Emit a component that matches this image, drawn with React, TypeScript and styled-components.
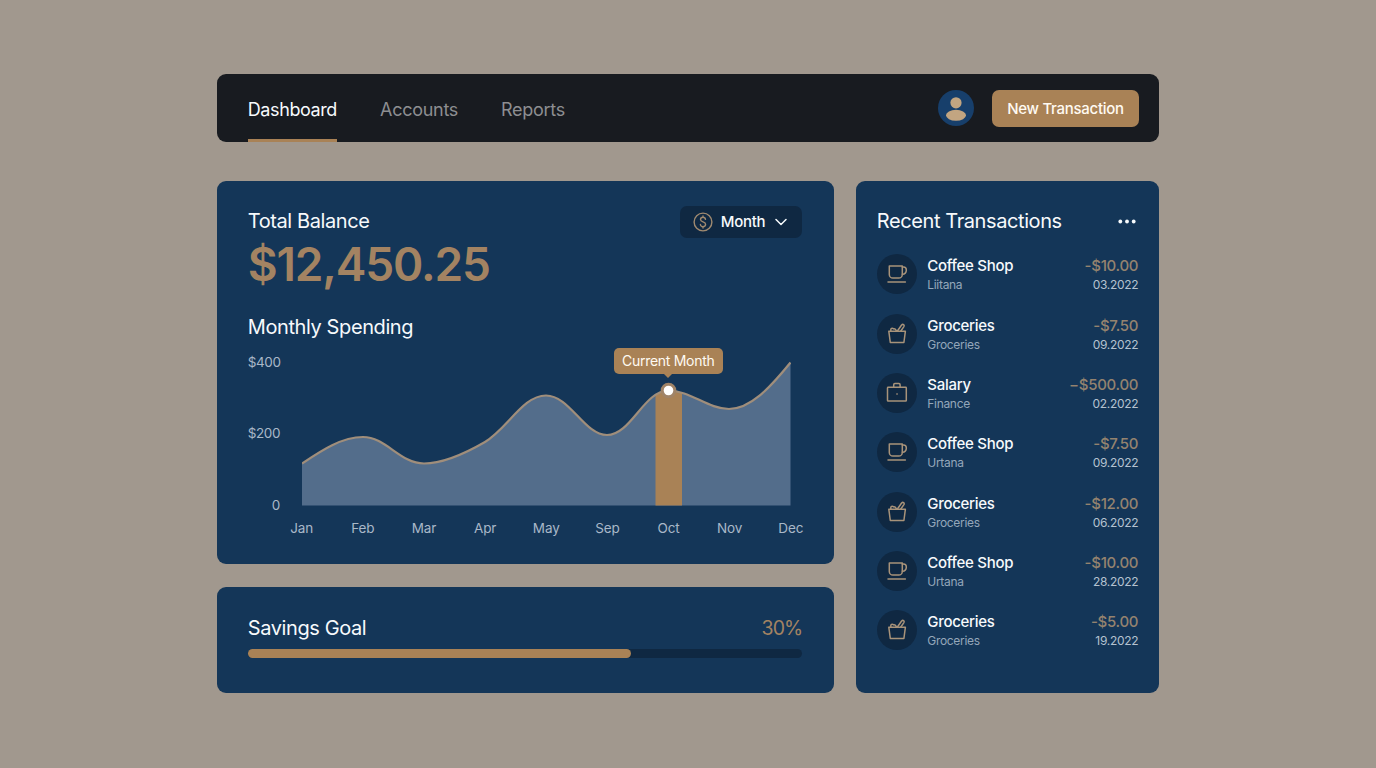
import React from "react";
import styled, { createGlobalStyle } from "styled-components";

const colors = {
  page: "#a1988e",
  bar: "#181b20",
  card: "#143658",
  deep: "#0f2842",
  gold: "#a98256",
  goldText: "#a38362",
  white: "#f7fafc",
  muted: "#a9b8c8",
};

const transactions = [
  { icon: "cup", name: "Coffee Shop", place: "Liitana", amount: "-$10.00", date: "03.2022" },
  { icon: "basket", name: "Groceries", place: "Groceries", amount: "-$7.50", date: "09.2022" },
  { icon: "case", name: "Salary", place: "Finance", amount: "−$500.00", date: "02.2022" },
  { icon: "cup", name: "Coffee Shop", place: "Urtana", amount: "-$7.50", date: "09.2022" },
  { icon: "basket", name: "Groceries", place: "Groceries", amount: "-$12.00", date: "06.2022" },
  { icon: "cup", name: "Coffee Shop", place: "Urtana", amount: "-$10.00", date: "28.2022" },
  { icon: "basket", name: "Groceries", place: "Groceries", amount: "-$5.00", date: "19.2022" },
];

const months = ["Jan", "Feb", "Mar", "Apr", "May", "Sep", "Oct", "Nov", "Dec"];

const curve =
  "M0 111.5 C20 98 40 85 61 85 C84 85 98 111.5 122 111.5 C142 111.5 164 101 183 90 C206 76 221 43.5 244 43.5 C268 43.5 282 83 305 83 C329 83 342 38.5 366.5 38.5 C388 38.5 406 57 427 57 C448 57 467 37 488.5 10.5";

function Icon({ name }: { name: string }) {
  return (
    <svg width="24" height="24" viewBox="0 0 24 24" fill="none" stroke="#a8937a" strokeWidth="1.5" strokeLinejoin="round" strokeLinecap="round">
      {name === "cup" && (
        <>
          <path d="M4.3 3.9h13v8.6a3.6 3.6 0 0 1-3.6 3.6H7.9a3.6 3.6 0 0 1-3.6-3.6z" />
          <path d="M17.3 5h1.200a2.800 2.800 0 0 1 2.800 2.800v.8a3.600 3.600 0 0 1-3.600 3.600h-.4" />
          <path d="M3 19.900h17.400" />
        </>
      )}
      {name === "basket" && (
        <>
          <path d="M3.800 9.200h16.600l-1.500 11.300H5.300z" />
          <path d="M5.800 8.900V7.500q.1-1.200 1.300-1.200 1 0 1.400.6.900-.4 1.600.2l1.500 1.800" />
          <path d="M12.400 9 16.600 3q1-1 2-.4 1 .8.300 2L15.800 9" />
        </>
      )}
      {name === "case" && (
        <>
          <rect x="2.500" y="6.300" width="18.800" height="13.800" rx=".6" />
          <path d="M8.700 6.100V3.800q0-1.200 1.200-1.200h4q1.200 0 1.200 1.200v2.300" />
          <path d="M11.900 13h.3" />
        </>
      )}
    </svg>
  );
}

export default function App() {
  return (
    <Page>
      <GlobalStyle />
      <Navbar>
        <Tabs>
          <Tab $active>Dashboard</Tab>
          <Tab>Accounts</Tab>
          <Tab>Reports</Tab>
        </Tabs>
        <Avatar>
          <svg width="36" height="36" viewBox="0 0 36 36" fill="#c2a581">
            <circle cx="18" cy="12.8" r="5.6" />
            <ellipse cx="18" cy="25.3" rx="10" ry="5.5" />
          </svg>
        </Avatar>
        <NewButton>New Transaction</NewButton>
      </Navbar>

      <Content>
        <Column>
          <BalanceCard>
            <CardHead>
              <Title>Total Balance</Title>
              <MonthSelect>
                <svg width="20" height="20" viewBox="0 0 20 20" fill="none" stroke="#a08a70" strokeWidth="1.4" strokeLinecap="round">
                  <circle cx="10" cy="10" r="8.9" />
                  <path d="M12.500 7.300c-.2-1.400-1.200-2.100-2.500-2.100-1.500 0-2.500.9-2.500 2.300 0 3.100 5.100 1.700 5.100 4.800 0 1.500-1.100 2.400-2.600 2.400-1.400 0-2.400-.8-2.600-2.200M10 4v1.200M10 14.800V16" />
                </svg>
                <span>Month</span>
                <svg width="12" height="8" viewBox="0 0 12 8" fill="none" stroke={colors.white} strokeWidth="1.5" strokeLinecap="round" strokeLinejoin="round">
                  <path d="M1 1.5 6 6.5l5-5" />
                </svg>
              </MonthSelect>
            </CardHead>
            <Amount>$12,450.25</Amount>
            <SpendingTitle>Monthly Spending</SpendingTitle>
            <Chart>
              <YAxis>
                <span>$400</span>
                <span>$200</span>
                <span>0</span>
              </YAxis>
              <Plot>
                <svg width="489" height="163" viewBox="0 0 489 163" fill="none">
                  <path d={`${curve} V153.5 H0 Z`} fill="#536d8b" />
                  <path d="M353.5 42 Q366.5 36 380 41 V153.5 H353.5 Z" fill={colors.gold} />
                  <path d={curve} stroke="#a08e7b" strokeWidth="2.2" />
                  <circle cx="366.5" cy="38.5" r="7.8" fill="#a08468" />
                  <circle cx="366.5" cy="38.5" r="4.8" fill="#fff" />
                </svg>
                <Tooltip>Current Month</Tooltip>
                <XAxis>
                  {months.map((m) => (
                    <span key={m}>{m}</span>
                  ))}
                </XAxis>
              </Plot>
            </Chart>
          </BalanceCard>

          <SavingsCard>
            <CardHead>
              <Title>Savings Goal</Title>
              <Percent>30%</Percent>
            </CardHead>
            <Track>
              <Fill />
            </Track>
          </SavingsCard>
        </Column>

        <RecentCard>
          <CardHead>
            <Title>Recent Transactions</Title>
            <svg width="20" height="30" viewBox="0 0 20 30" fill={colors.white}>
              <circle cx="2.3" cy="15.5" r="1.9" />
              <circle cx="9" cy="15.5" r="1.9" />
              <circle cx="15.7" cy="15.5" r="1.9" />
            </svg>
          </CardHead>
          <List>
            {transactions.map((t, i) => (
              <Row key={i}>
                <IconCircle>
                  <Icon name={t.icon} />
                </IconCircle>
                <Info>
                  <Name>{t.name}</Name>
                  <Small>{t.place}</Small>
                </Info>
                <Info $right>
                  <Price>{t.amount}</Price>
                  <Small $bright>{t.date}</Small>
                </Info>
              </Row>
            ))}
          </List>
        </RecentCard>
      </Content>
    </Page>
  );
}

const GlobalStyle = createGlobalStyle`
  * {
    box-sizing: border-box;
  }

  body {
    margin: 0;
    background-color: ${colors.page};
    font-family: Inter, "Liberation Sans", sans-serif;
  }
`;

const Page = styled.div`
  width: 942.5px;
  margin: 0 auto;
  padding-top: 74px;
`;

const Navbar = styled.nav`
  display: flex;
  align-items: center;
  height: 68px;
  padding: 0 20px 0 31px;
  border-radius: 9px;
  background-color: ${colors.bar};
`;

const Tabs = styled.div`
  display: flex;
  gap: 43px;
  height: 100%;
  margin-right: auto;
`;

const Tab = styled.a<{ $active?: boolean }>`
  height: 100%;
  padding-top: 3px;
  border-bottom: 3px solid ${(p) => (p.$active ? colors.gold : "transparent")};
  color: ${(p) => (p.$active ? colors.white : "#8d8e91")};
  font-size: 18px;
  line-height: 66px;
  letter-spacing: ${(p) => (p.$active ? "-0.4px" : "-0.28px")};
`;

const Avatar = styled.div`
  width: 36px;
  height: 36px;
  margin-right: 17.5px;
  border-radius: 50%;
  background-color: #173f6b;
`;

const NewButton = styled.button`
  width: 147.5px;
  height: 37px;
  padding: 0;
  border: 0;
  border-radius: 7px;
  background-color: ${colors.gold};
  color: #fffaf2;
  font: 500 15px Inter, sans-serif;
  letter-spacing: -0.28px;
`;

const Content = styled.main`
  display: flex;
  gap: 22px;
  margin-top: 38.8px;
`;

const Column = styled.div`
  display: flex;
  flex-direction: column;
  gap: 22.5px;
  width: 617px;
`;

const Card = styled.section`
  border-radius: 9px;
  background-color: ${colors.card};
`;

const BalanceCard = styled(Card)`
  height: 383.5px;
  padding: 25.2px 31.4px 0 31px;
`;

const SavingsCard = styled(Card)`
  height: 106.5px;
  padding: 26.2px 31.4px 0 31px;
`;

const RecentCard = styled(Card)`
  width: 303.5px;
  height: 512.5px;
  padding: 25.2px 21px 0;
`;

const CardHead = styled.div`
  display: flex;
  justify-content: space-between;
  height: 30px;
`;

const Title = styled.h2`
  margin: 0;
  color: ${colors.white};
  font-size: 20px;
  font-weight: 400;
  line-height: 30px;
  letter-spacing: -0.4px;
`;

const SpendingTitle = styled(Title)`
  margin-top: 23px;
`;

const MonthSelect = styled.div`
  display: flex;
  align-items: center;
  gap: 7.5px;
  width: 122.5px;
  height: 32px;
  padding-left: 13.5px;
  border-radius: 7px;
  background-color: ${colors.deep};
  color: ${colors.white};
  font-size: 15px;
  font-weight: 500;
  letter-spacing: -0.3px;

  svg:last-child {
    margin-left: 2px;
  }
`;

const Amount = styled.div`
  margin-top: 3.2px;
  color: ${colors.goldText};
  font-size: 46px;
  font-weight: 600;
  line-height: 50px;
  letter-spacing: -1.15px;
`;

const Chart = styled.div`
  display: flex;
  gap: 22px;
  margin-top: 9.6px;
  color: ${colors.muted};
  font-size: 13.5px;
  line-height: 20px;
`;

const YAxis = styled.div`
  display: flex;
  flex-direction: column;
  justify-content: space-between;
  width: 32px;
  height: 163px;
  text-align: right;
  letter-spacing: -0.4px;
`;

const Plot = styled.div`
  position: relative;
  width: 489px;

  svg {
    display: block;
  }
`;

const XAxis = styled.div`
  display: flex;
  justify-content: space-between;
  margin-top: 3.2px;
  letter-spacing: -0.1px;

  span {
    display: flex;
    justify-content: center;
    width: 0;
  }
`;

const Tooltip = styled.div`
  position: absolute;
  left: 312px;
  top: -4px;
  width: 109px;
  height: 26px;
  border-radius: 5px;
  background-color: ${colors.gold};
  color: #fffaf2;
  font-size: 14px;
  line-height: 26px;
  letter-spacing: -0.28px;
  text-align: center;

  &::after {
    content: "";
    position: absolute;
    left: 49px;
    top: 25.5px;
    border: 5.5px solid transparent;
    border-bottom: 0;
    border-top-color: ${colors.gold};
  }
`;

const Percent = styled.span`
  color: ${colors.goldText};
  font-size: 19.5px;
  line-height: 30px;
  letter-spacing: -0.9px;
`;

const Track = styled.div`
  height: 9px;
  margin-top: 6.2px;
  border-radius: 4.5px;
  background-color: ${colors.deep};
`;

const Fill = styled.div`
  width: 69.1%;
  height: 100%;
  border-radius: 4.5px;
  background-color: ${colors.gold};
`;

const List = styled.div`
  display: grid;
  grid-auto-rows: 59.3px;
  margin-top: 8.7px;
`;

const Row = styled.div`
  display: flex;
  align-items: center;
`;

const IconCircle = styled.div`
  display: flex;
  align-items: center;
  justify-content: center;
  width: 40px;
  height: 40px;
  margin-right: 10.5px;
  border-radius: 50%;
  background-color: ${colors.deep};
`;

const Info = styled.div<{ $right?: boolean }>`
  display: flex;
  flex-direction: column;
  padding-top: 2px;
  margin-left: ${(p) => (p.$right ? "auto" : "0")};
  text-align: ${(p) => (p.$right ? "right" : "left")};
`;

const Name = styled.span`
  color: ${colors.white};
  font-size: 15px;
  font-weight: 500;
  line-height: 20px;
  letter-spacing: -0.28px;
`;

const Price = styled(Name)`
  color: #94836f;
`;

const Small = styled.span<{ $bright?: boolean }>`
  color: ${(p) => (p.$bright ? "#b4c2d0" : "#94a7ba")};
  font-size: 12px;
  line-height: 18px;
  letter-spacing: -0.3px;
`;
